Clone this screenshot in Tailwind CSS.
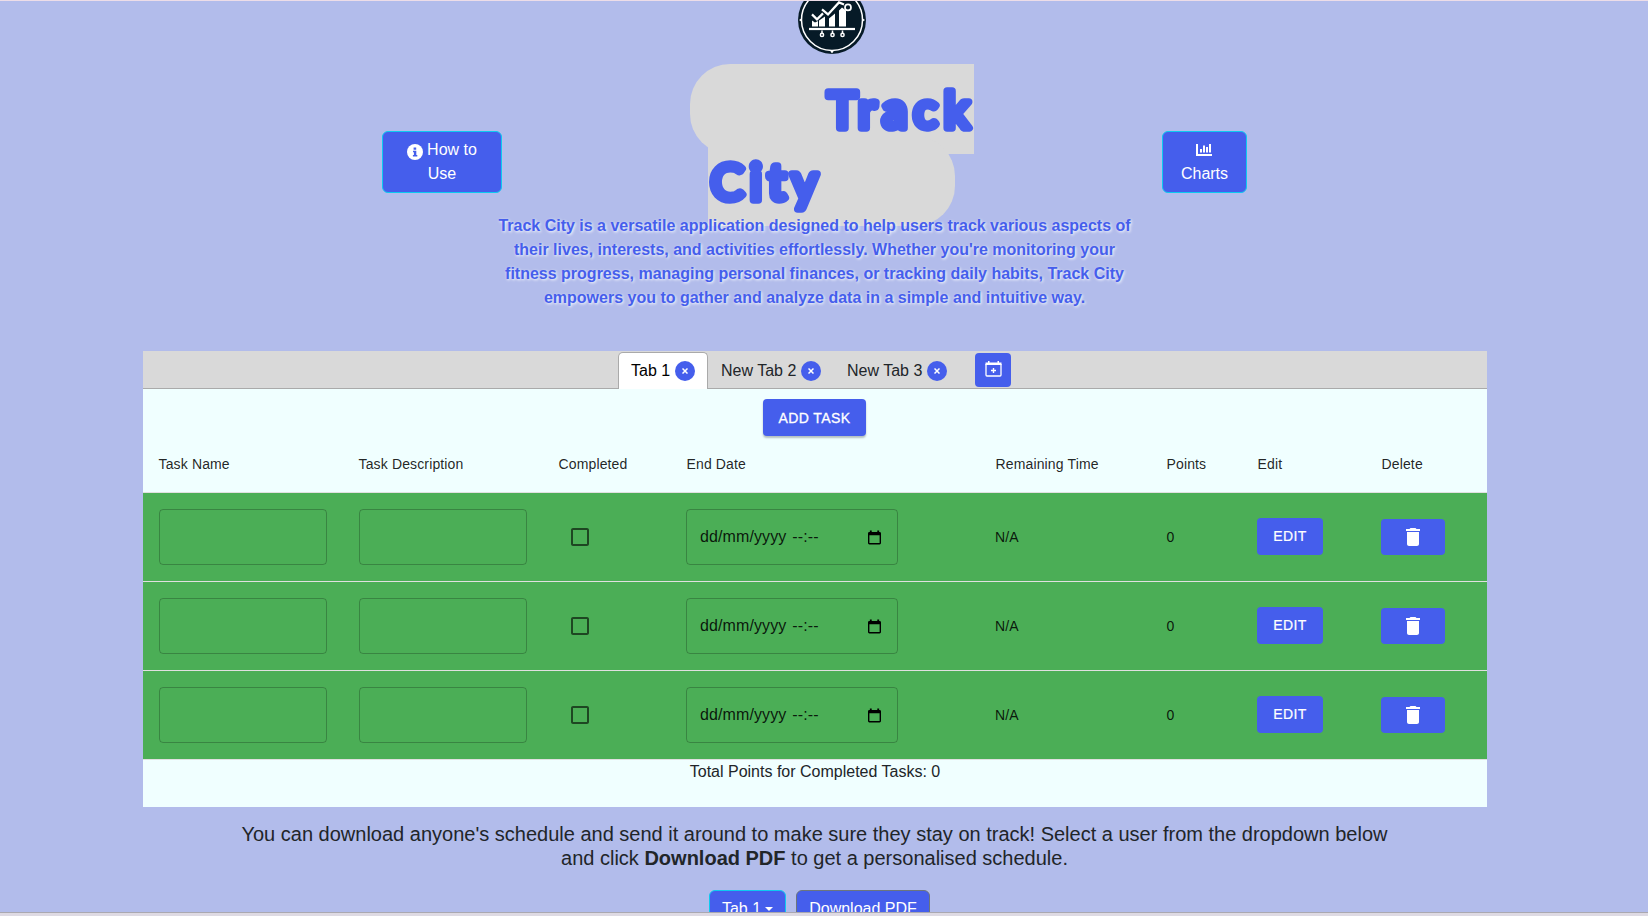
<!DOCTYPE html>
<html lang="en">
<head>
<meta charset="utf-8">
<title>Track City</title>
<script src="https://cdn.jsdelivr.net/npm/@tailwindcss/browser@4"></script>
</head>
<body class="h-[916px] overflow-hidden bg-[#b2bceb] text-[#212529] text-base leading-6 font-['Liberation_Sans',Arial,sans-serif]">
<svg class="hidden">
  <symbol id="cal" viewBox="0 0 14 15"><path d="M2 0h2v1.500h6V0h2v1.500h.5A1.500 1.500 0 0 1 14 3v10.500A1.500 1.500 0 0 1 12.500 15h-11A1.500 1.500 0 0 1 0 13.500V3a1.500 1.500 0 0 1 1.500-1.500H2zM1.500 5v8.500h11V5z"/></symbol>
  <symbol id="box" viewBox="0 0 24 24"><path d="M19 5v14H5V5h14m0-2H5c-1.100 0-2 .9-2 2v14c0 1.100.9 2 2 2h14c1.100 0 2-.9 2-2V5c0-1.100-.9-2-2-2z"/></symbol>
  <symbol id="bin" viewBox="0 0 24 24"><path d="M6 19c0 1.100.9 2 2 2h8c1.100 0 2-.9 2-2V7H6v12zM19 4h-3.500l-1-1h-5l-1 1H5v2h14V4z"/></symbol>
</svg>
<div class="h-[912px] overflow-hidden border-t border-[#eddde8]">
  <header class="h-[350px] flex flex-col">
    <div class="h-[63px] shrink-0 pl-[798px]">
      <svg class="w-[68px] h-[53px]" viewBox="0 .6 68 53">
        <circle cx="34" cy="19.500" r="34" fill="#061a27"/>
        <circle cx="34" cy="19.500" r="30.500" fill="none" stroke="#fff" stroke-width="1.500"/>
        <g fill="#fff">
          <path d="M14 20l3 2 3-1.500V26h-6zM21 20l6-4v10h-6zM31 18l6-5v13h-6zM41 10l3-3 4 3v16h-7z"/>
          <rect x="11" y="27.500" width="46" height="2.200"/>
          <path d="M1 19.500l3-2v4zM67 19.500l-3-2v4zM34 53l-2-3h4z"/>
        </g>
        <path d="M14 14l5 5 6-6M24 9l6 5L41 2l5 2" fill="none" stroke="#fff" stroke-width="2.200"/>
        <circle cx="50" cy="7" r="3" fill="none" stroke="#fff" stroke-width="1.700"/>
        <g fill="none" stroke="#fff" stroke-width="1.500"><path d="M24 30v3M34.500 30v3M44.500 30v3"/><circle cx="24" cy="34.500" r="1.600"/><circle cx="34.500" cy="34.500" r="1.600"/><circle cx="44.500" cy="34.500" r="1.600"/></g>
      </svg>
    </div>
    <div class="flex h-[152px] shrink-0 pl-[382px]">
      <button class="mt-[67px] h-[62px] w-[120px] shrink-0 rounded-md border border-[#0dcaf0] bg-[#455eec] text-white">
        <span class="flex items-center justify-center gap-1"><svg class="mt-[3px] size-4" viewBox="0 0 16 16"><circle cx="8" cy="8" r="8" fill="#fff"/><path d="M6.600 3.400h2.600v2.400H6.600zM6 6.800h3.300v4.200h1v1.500H5.900V11h1V8.300H6z" fill="#455eec"/></svg>How to</span>
        <span class="block">Use</span>
      </button>
      <h1 class="ml-[188px] w-[284px] shrink-0">
        <span class="flex h-[90px] items-start justify-end rounded-l-[40px] bg-[#d9d9d9]">
          <svg class="h-[90px] w-[150px] overflow-visible" viewBox="0 0 150 90"><text x="3.500" y="63.800" textLength="142" lengthAdjust="spacing" class="font-['Lato',sans-serif] text-[50px] font-medium" fill="#455eec" stroke="#455eec" stroke-width="7.500" stroke-linejoin="round">Track</text></svg>
        </span>
        <span class="-mt-[18px] ml-[18px] flex h-[90px] w-[247px] rounded-r-[40px] bg-[#d9d9d9]">
          <svg class="h-[90px] w-[120px] overflow-visible" viewBox="0 0 120 90"><text x="2.500" y="63.800" textLength="107" lengthAdjust="spacing" class="font-['Lato',sans-serif] text-[50px] font-medium" fill="#455eec" stroke="#455eec" stroke-width="7.500" stroke-linejoin="round">City</text></svg>
        </span>
      </h1>
      <button class="ml-[188px] mt-[67px] h-[62px] w-[85px] shrink-0 rounded-md border border-[#0dcaf0] bg-[#455eec] text-white">
        <svg class="ml-[33px] mt-[6px] mb-[6px] h-3 w-4" viewBox="0 0 16 12" fill="#fff"><path d="M0 0h2v10h14v2H0zM4 5h2v3.500H4zM7 1.500h2v7H7zM10 3h2v5.500h-2zM13 0h2v8.500h-2z"/></svg>
        <span class="block">Charts</span>
      </button>
    </div>
    <p class="relative -mt-[2px] w-[1629px] text-center font-bold text-[#455eec] [text-shadow:1px_1px_3px_#fff]">Track City is a versatile application designed to help users track various aspects of<br>their lives, interests, and activities effortlessly. Whether you're monitoring your<br>fitness progress, managing personal finances, or tracking daily habits, Track City<br>empowers you to gather and analyze data in a simple and intuitive way.</p>
  </header>

  <main class="ml-[143px] h-[456px] w-[1344px] bg-[#f0ffff]">
    <nav class="flex h-[38px] border-b border-[#aaa] bg-[#d9d9d9] pl-[475px]">
      <div class="mt-px flex h-[37px] w-[90px] shrink-0 items-center gap-[5px] rounded-t-[5px] border border-b-0 border-[#aaa] bg-white pl-3 text-black">Tab 1<span class="flex size-5 items-center justify-center rounded-full bg-[#455eec]"><svg class="size-[6px]" viewBox="0 0 6 6"><path d="M.5.5l5 5M5.500.5l-5 5" stroke="#fff" stroke-width="1.500"/></svg></span></div>
      <div class="mt-[2px] flex h-[36px] w-[126px] shrink-0 items-center gap-[5px] pl-[13px]">New Tab 2<span class="flex size-5 items-center justify-center rounded-full bg-[#455eec]"><svg class="size-[6px]" viewBox="0 0 6 6"><path d="M.5.5l5 5M5.500.5l-5 5" stroke="#fff" stroke-width="1.500"/></svg></span></div>
      <div class="mt-[2px] flex h-[36px] w-[141px] shrink-0 items-center gap-[5px] pl-[13px]">New Tab 3<span class="flex size-5 items-center justify-center rounded-full bg-[#455eec]"><svg class="size-[6px]" viewBox="0 0 6 6"><path d="M.5.5l5 5M5.500.5l-5 5" stroke="#fff" stroke-width="1.500"/></svg></span></div>
      <button class="mt-[2px] flex h-[34px] w-9 items-center justify-center rounded bg-[#455eec]"><svg class="-mt-[2px] h-4 w-[17px]" viewBox="0 0 17 16"><path d="M1 3v11q0 1 1 1h13q1 0 1-1V3" fill="none" stroke="#fff" stroke-width="1.300"/><path d="M3 0h1.500v1.500h8V0H14v1.500h2.500V4H.5V1.500H3z" fill="#fff"/><path d="M8.500 7v5M6 9.500h5" stroke="#fff" stroke-width="1.400"/></svg></button>
    </nav>
    <div class="flex h-[47px] pl-[620px] pt-[10px]"><button class="h-[37px] w-[103px] rounded bg-[#455eec] text-sm font-medium tracking-[0.4px] text-white shadow-[0_2px_2px_rgba(0,0,0,.25)] [-webkit-text-stroke:.3px_#fff]">ADD TASK</button></div>
    <div class="grid h-[57px] grid-cols-[200px_200px_128px_309px_171px_91px_124px_1fr] items-center border-b border-[#e0e0e0] pl-4 text-sm tracking-[0.14px] text-black/87 [&>*]:-ml-[.5px]">
      <div>Task Name</div><div>Task Description</div><div>Completed</div><div>End Date</div><div>Remaining Time</div><div>Points</div><div>Edit</div><div>Delete</div>
    </div>
    <div id="rows"></div>
    <p class="text-center">Total Points for Completed Tasks: 0</p>
  </main>

  <section class="w-[1629px] pt-[15px] text-center">
    <p class="text-xl leading-6">You can download anyone's schedule and send it around to make sure they stay on track! Select a user from the dropdown below<br>and click <b>Download PDF</b> to get a personalised schedule.</p>
    <div class="mt-5 flex gap-[10px] pl-[709px] text-white">
      <button class="flex h-[38px] w-[77px] items-center justify-center gap-1 rounded-md border border-[#0dcaf0] bg-[#455eec]">Tab 1<svg class="h-1 w-2" viewBox="0 0 8 4"><path d="M0 0h8L4 4z" fill="#fff"/></svg></button>
      <button class="h-[38px] w-[134px] rounded-md border border-[#6c757d] bg-[#455eec]">Download PDF</button>
    </div>
  </section>
</div>
<footer class="h-1 border-t border-[#aaa8b0] bg-[#dedae3]"></footer>

<template id="row">
  <div class="grid h-[89px] grid-cols-[200px_200px_128px_309px_171px_91px_124px_1fr] items-center border-b border-[#e0e0e0] bg-[#4bae56] pl-4 text-sm tracking-[0.14px] text-black/87">
    <div class="h-14 w-[168px] rounded border border-black/23"></div>
    <div class="h-14 w-[168px] rounded border border-black/23"></div>
    <div class="pl-[9px]"><svg class="size-6" fill="rgba(0,0,0,.6)"><use href="#box"/></svg></div>
    <div class="-ml-px flex h-14 w-[212px] items-center rounded border border-black/23 pl-[13px] text-base tracking-[0.1px]"><span>dd/mm/yyyy</span><span class="ml-[6px]">--:--</span><svg class="ml-auto mr-4 h-[15px] w-[13px] text-black" fill="currentColor"><use href="#cal"/></svg></div>
    <div class="-ml-px">N/A</div>
    <div class="-ml-[.5px]">0</div>
    <div><button class="-ml-px -mt-[2px] block h-[37px] w-[66px] rounded bg-[#455eec] text-sm font-medium tracking-[0.4px] text-white [-webkit-text-stroke:.2px_#fff]">EDIT</button></div>
    <div><button class="-ml-px -mt-px flex h-9 w-16 items-center justify-center rounded bg-[#455eec]"><svg class="size-6" fill="#fff"><use href="#bin"/></svg></button></div>
  </div>
</template>
<script>
const rows = document.getElementById('rows');
for (let i = 0; i < 3; i++) rows.append(document.getElementById('row').content.cloneNode(true));
</script>
</body>
</html>
